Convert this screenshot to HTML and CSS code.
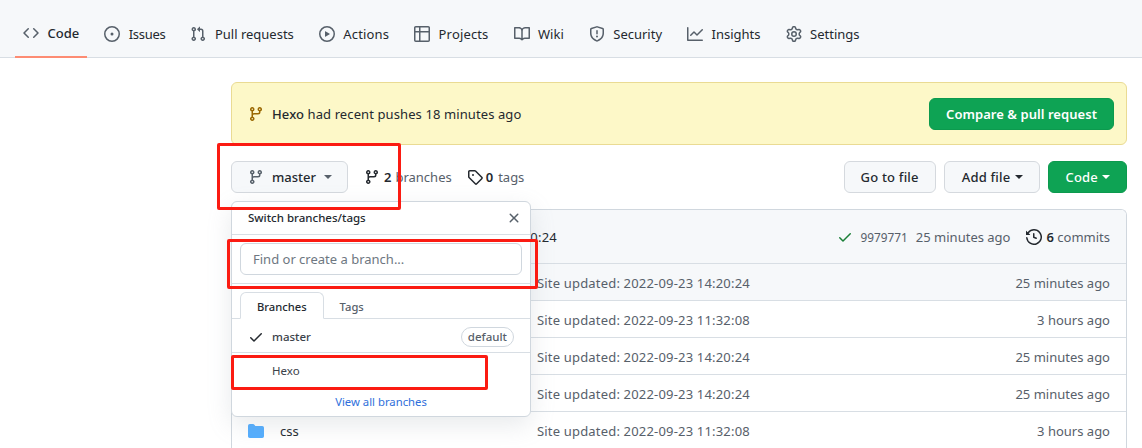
FILE: index.html
```html
<!DOCTYPE html>
<html lang="en">
<head>
<meta charset="utf-8">
<title>Repository</title>
<link rel="stylesheet" href="styles.css">
</head>
<body>
<svg class="defs" aria-hidden="true">
<symbol id="i-code" viewBox="0 0 16 16"><path d="M4.72 3.22a.75.75 0 011.06 1.06L2.06 8l3.72 3.72a.75.75 0 11-1.06 1.06L.47 8.53a.75.75 0 010-1.06l4.25-4.25zm6.56 0a.75.75 0 10-1.06 1.06L13.94 8l-3.72 3.72a.75.75 0 101.06 1.06l4.25-4.25a.75.75 0 000-1.06l-4.25-4.25z"/></symbol>
<symbol id="i-issue" viewBox="0 0 16 16"><path d="M8 9.5a1.5 1.5 0 100-3 1.5 1.5 0 000 3z"/><path fill-rule="evenodd" d="M8 0a8 8 0 100 16A8 8 0 008 0zM1.5 8a6.5 6.5 0 1113 0 6.5 6.5 0 01-13 0z"/></symbol>
<symbol id="i-pr" viewBox="0 0 16 16"><path fill-rule="evenodd" d="M7.177 3.073L9.573.677A.25.25 0 0110 .854v4.792a.25.25 0 01-.427.177L7.177 3.427a.25.25 0 010-.354zM3.75 2.5a.75.75 0 100 1.5.75.75 0 000-1.5zm-2.25.75a2.25 2.25 0 113 2.122v5.256a2.251 2.251 0 11-1.5 0V5.372A2.25 2.25 0 011.5 3.25zM11 2.5h-1V4h1a1 1 0 011 1v5.628a2.251 2.251 0 101.5 0V5A2.5 2.5 0 0011 2.5zm1 10.25a.75.75 0 111.5 0 .75.75 0 01-1.5 0zM3.75 12a.75.75 0 100 1.5.75.75 0 000-1.5z"/></symbol>
<symbol id="i-play" viewBox="0 0 16 16"><path fill-rule="evenodd" d="M1.5 8a6.5 6.5 0 1113 0 6.5 6.5 0 01-13 0zM8 0a8 8 0 100 16A8 8 0 008 0zM6.379 5.227A.25.25 0 006 5.442v5.117a.25.25 0 00.379.214l4.264-2.559a.25.25 0 000-.428L6.379 5.227z"/></symbol>
<symbol id="i-table" viewBox="0 0 16 16"><path fill-rule="evenodd" d="M0 1.75C0 .784.784 0 1.75 0h12.5C15.216 0 16 .784 16 1.75v12.5A1.75 1.75 0 0114.25 16H1.75A1.75 1.75 0 010 14.25V1.75zM6.5 6.5v8h7.75a.25.25 0 00.25-.25V6.5h-8zm8-1.5V1.75a.25.25 0 00-.25-.25H6.5V5h8zM5 1.5H1.75a.25.25 0 00-.25.25V5H5V1.5zM1.5 6.5v7.75c0 .138.112.25.25.25H5v-8H1.5z"/></symbol>
<symbol id="i-book" viewBox="0 0 16 16"><path fill-rule="evenodd" d="M0 1.75A.75.75 0 01.75 1h4.253c1.227 0 2.317.59 3 1.501A3.744 3.744 0 0111.006 1h4.245a.75.75 0 01.75.75v10.5a.75.75 0 01-.75.75h-4.507a2.25 2.25 0 00-1.591.659l-.622.621a.75.75 0 01-1.06 0l-.622-.621A2.25 2.25 0 005.258 13H.75a.75.75 0 01-.75-.75V1.75zm8.755 3a2.25 2.25 0 012.25-2.25H14.5v9h-3.757c-.71 0-1.4.201-1.992.572l.004-7.322zm-1.504 7.324l.004-5.073-.002-2.253A2.25 2.25 0 005.003 2.5H1.5v9h3.757a3.75 3.75 0 011.994.574z"/></symbol>
<symbol id="i-shield" viewBox="0 0 16 16"><path fill-rule="evenodd" d="M7.467.133a1.75 1.75 0 011.066 0l5.25 1.68A1.75 1.75 0 0115 3.48V7c0 1.566-.32 3.182-1.303 4.682-.983 1.498-2.585 2.813-5.032 3.855a1.7 1.7 0 01-1.33 0c-2.447-1.042-4.049-2.357-5.032-3.855C1.32 10.182 1 8.566 1 7V3.48a1.75 1.75 0 011.217-1.667l5.25-1.68zm.61 1.429a.25.25 0 00-.153 0l-5.25 1.68a.25.25 0 00-.174.238V7c0 1.358.275 2.666 1.057 3.86.784 1.194 2.121 2.34 4.366 3.297a.2.2 0 00.154 0c2.245-.956 3.582-2.104 4.366-3.298C13.225 9.666 13.5 8.36 13.5 7V3.48a.25.25 0 00-.174-.237l-5.25-1.68zM9 10.5a1 1 0 11-2 0 1 1 0 012 0zm-.25-5.75a.75.75 0 10-1.5 0v3a.75.75 0 001.5 0v-3z"/></symbol>
<symbol id="i-graph" viewBox="0 0 16 16"><path fill-rule="evenodd" d="M1.5 1.75a.75.75 0 00-1.5 0v12.5c0 .414.336.75.75.75h14.5a.75.75 0 000-1.5H1.5V1.75zm14.28 2.53a.75.75 0 00-1.06-1.06L10 7.94 7.53 5.47a.75.75 0 00-1.06 0L3.22 8.72a.75.75 0 001.06 1.06L7 7.06l2.47 2.47a.75.75 0 001.06 0l5.25-5.25z"/></symbol>
<symbol id="i-gear" viewBox="0 0 16 16"><path fill-rule="evenodd" d="M7.429 1.525a6.593 6.593 0 011.142 0c.036.003.108.036.137.146l.289 1.105c.147.56.55.967.997 1.189.174.086.341.183.501.29.417.278.97.423 1.53.27l1.102-.303c.11-.03.175.016.195.046.219.31.41.641.573.989.014.031.022.11-.059.19l-.815.806c-.411.406-.562.957-.53 1.456a4.588 4.588 0 010 .582c-.032.499.119 1.05.53 1.456l.815.806c.08.08.073.159.059.19a6.494 6.494 0 01-.573.99c-.02.029-.086.074-.195.045l-1.103-.303c-.559-.153-1.112-.008-1.529.27-.16.107-.327.204-.5.29-.449.222-.851.628-.998 1.189l-.289 1.105c-.029.11-.101.143-.137.146a6.613 6.613 0 01-1.142 0c-.036-.003-.108-.037-.137-.146l-.289-1.105c-.147-.56-.55-.967-.997-1.189a4.502 4.502 0 01-.501-.29c-.417-.278-.97-.423-1.53-.27l-1.102.303c-.11.03-.175-.016-.195-.046a6.492 6.492 0 01-.573-.989c-.014-.031-.022-.11.059-.19l.815-.806c.411-.406.562-.957.53-1.456a4.587 4.587 0 010-.582c.032-.499-.119-1.05-.53-1.456l-.815-.806c-.08-.08-.073-.159-.059-.19a6.44 6.44 0 01.573-.99c.02-.029.086-.075.195-.045l1.103.303c.559.153 1.112.008 1.529-.27.16-.107.327-.204.5-.29.449-.222.851-.628.998-1.189l.289-1.105c.029-.11.101-.143.137-.146zM8 0c-.236 0-.47.01-.701.03-.743.065-1.29.615-1.458 1.261l-.29 1.106c-.017.066-.078.158-.211.224a5.994 5.994 0 00-.668.386c-.123.082-.233.09-.3.071L3.27 2.776c-.644-.177-1.392.02-1.82.63a7.977 7.977 0 00-.704 1.217c-.315.675-.111 1.422.363 1.891l.815.806c.05.048.098.147.088.294a6.084 6.084 0 000 .772c.01.147-.038.246-.088.294l-.815.806c-.474.469-.678 1.216-.363 1.891.2.428.436.835.704 1.218.428.609 1.176.806 1.82.63l1.103-.303c.066-.019.176-.011.299.071.213.143.436.272.668.386.133.066.194.158.212.224l.289 1.106c.169.646.715 1.196 1.458 1.26a8.094 8.094 0 001.402 0c.743-.064 1.29-.614 1.458-1.26l.29-1.106c.017-.066.078-.158.211-.224a5.98 5.98 0 00.668-.386c.123-.082.233-.09.3-.071l1.102.302c.644.177 1.392-.02 1.82-.63.268-.382.505-.789.704-1.217.315-.675.111-1.422-.364-1.891l-.814-.806c-.05-.048-.098-.147-.088-.294a6.1 6.1 0 000-.772c-.01-.147.039-.246.088-.294l.814-.806c.475-.469.679-1.216.364-1.891a7.992 7.992 0 00-.704-1.218c-.428-.609-1.176-.806-1.82-.63l-1.103.303c-.066.019-.176.011-.299-.071a5.991 5.991 0 00-.668-.386c-.133-.066-.194-.158-.212-.224L10.16 1.29C9.99.645 9.444.095 8.701.031A8.094 8.094 0 008 0zm1.5 8a1.5 1.5 0 11-3 0 1.5 1.5 0 013 0zM11 8a3 3 0 11-6 0 3 3 0 016 0z"/></symbol>
<symbol id="i-branch" viewBox="0 0 16 16"><path fill-rule="evenodd" d="M11.75 2.5a.75.75 0 100 1.5.75.75 0 000-1.5zm-2.25.75a2.25 2.25 0 113 2.122V6A2.5 2.5 0 0110 8.5H6a1 1 0 00-1 1v1.128a2.251 2.251 0 11-1.5 0V5.372a2.25 2.25 0 111.5 0v1.836A2.492 2.492 0 016 7h4a1 1 0 001-1v-.628A2.25 2.25 0 019.5 3.25zM4.25 12a.75.75 0 100 1.5.75.75 0 000-1.5zM3.5 3.25a.75.75 0 111.5 0 .75.75 0 01-1.5 0z"/></symbol>
<symbol id="i-tag" viewBox="0 0 16 16"><path fill-rule="evenodd" d="M2.5 7.775V2.75a.25.25 0 01.25-.25h5.025a.25.25 0 01.177.073l6.25 6.25a.25.25 0 010 .354l-5.025 5.025a.25.25 0 01-.354 0l-6.25-6.25a.25.25 0 01-.073-.177zm-1.5 0V2.75C1 1.784 1.784 1 2.75 1h5.025c.464 0 .91.184 1.238.513l6.25 6.25a1.75 1.75 0 010 2.474l-5.026 5.026a1.75 1.75 0 01-2.474 0l-6.25-6.25A1.75 1.75 0 011 7.775zM6 5a1 1 0 100 2 1 1 0 000-2z"/></symbol>
<symbol id="i-check" viewBox="0 0 16 16"><path fill-rule="evenodd" d="M13.78 4.22a.75.75 0 010 1.06l-7.25 7.25a.75.75 0 01-1.06 0L2.22 9.28a.75.75 0 011.06-1.06L6 10.94l6.72-6.72a.75.75 0 011.06 0z"/></symbol>
<symbol id="i-x" viewBox="0 0 16 16"><path fill-rule="evenodd" d="M3.72 3.72a.75.75 0 011.06 0L8 6.94l3.22-3.22a.75.75 0 111.06 1.06L9.06 8l3.22 3.22a.75.75 0 11-1.06 1.06L8 9.06l-3.22 3.22a.75.75 0 01-1.06-1.06L6.94 8 3.72 4.78a.75.75 0 010-1.06z"/></symbol>
<symbol id="i-history" viewBox="0 0 16 16"><path fill-rule="evenodd" d="M1.643 3.143L.427 1.927A.25.25 0 000 2.104V5.75c0 .138.112.25.25.25h3.646a.25.25 0 00.177-.427L2.715 4.215a6.5 6.5 0 11-1.18 4.458.75.75 0 10-1.493.154 8.001 8.001 0 101.6-5.684zM7.75 4a.75.75 0 01.75.75v2.992l2.028.812a.75.75 0 01-.557 1.392l-2.5-1A.75.75 0 017 8.25v-3.5A.75.75 0 017.75 4z"/></symbol>
<symbol id="i-folder" viewBox="0 0 16 16"><path d="M1.75 1A1.75 1.75 0 000 2.75v10.5C0 14.216.784 15 1.75 15h12.5A1.75 1.75 0 0016 13.25v-8.5A1.75 1.75 0 0014.25 3H7.5a.25.25 0 01-.2-.1l-.9-1.2C6.07 1.26 5.55 1 5 1H1.75z"/></symbol>
</svg>

<nav class="tabs">
  <a class="tab tab-active"><svg class="ic"><use href="#i-code"/></svg><span>Code</span></a>
  <a class="tab"><svg class="ic"><use href="#i-issue"/></svg><span class="tight">Issues</span></a>
  <a class="tab"><svg class="ic"><use href="#i-pr"/></svg><span>Pull requests</span></a>
  <a class="tab"><svg class="ic"><use href="#i-play"/></svg><span class="loose">Actions</span></a>
  <a class="tab"><svg class="ic"><use href="#i-table"/></svg><span class="loose">Projects</span></a>
  <a class="tab"><svg class="ic"><use href="#i-book"/></svg><span>Wiki</span></a>
  <a class="tab"><svg class="ic"><use href="#i-shield"/></svg><span>Security</span></a>
  <a class="tab"><svg class="ic"><use href="#i-graph"/></svg><span>Insights</span></a>
  <a class="tab"><svg class="ic"><use href="#i-gear"/></svg><span>Settings</span></a>
</nav>

<main class="main">
  <section class="banner">
    <div class="banner-msg"><svg class="ic ic-amber"><use href="#i-branch"/></svg><span><b class="strong">Hexo</b> had recent pushes 18 minutes ago</span></div>
    <a class="btn btn-green btn-compare">Compare &amp; pull request</a>
  </section>

  <section class="toolbar">
    <a class="btn btn-branch"><svg class="ic ic-muted"><use href="#i-branch"/></svg><span class="branch-name">master</span><i class="caret caret-muted"></i></a>
    <a class="meta meta-branches"><svg class="ic ic-dark"><use href="#i-branch"/></svg><b class="count">2</b> <span>branches</span></a>
    <a class="meta meta-tags"><svg class="ic ic-dark"><use href="#i-tag"/></svg><b class="count">0</b> <span>tags</span></a>
    <div class="toolbar-right">
      <a class="btn">Go to file</a>
      <a class="btn btn-add">Add file<i class="caret"></i></a>
      <a class="btn btn-green">Code<i class="caret caret-white"></i></a>
    </div>

    <div class="popup">
      <header class="popup-head"><span>Switch branches/tags</span><svg class="ic ic-x"><use href="#i-x"/></svg></header>
      <div class="popup-filter"><div class="input">Find or create a branch...</div></div>
      <div class="popup-tabs"><span class="ptab ptab-on">Branches</span><span class="ptab">Tags</span></div>
      <div class="pitem pitem-line"><svg class="ic ic-check"><use href="#i-check"/></svg><span class="pitem-name">master</span><span class="pill">default</span></div>
      <div class="pitem"><span class="pitem-name pitem-plain">Hexo</span></div>
      <a class="popup-foot">View all branches</a>
    </div>
  </section>

  <section class="files">
    <div class="commit-row">
      <span class="commit-msg">Site updated: 2022-09-23 14:20:24</span>
      <span class="commit-info"><svg class="ic ic-green"><use href="#i-check"/></svg><span class="sha">9979771</span><span class="ago">25 minutes ago</span><svg class="ic ic-dark ic-hist"><use href="#i-history"/></svg><span class="commits"><b class="count">6</b> commits</span></span>
    </div>
    <div class="row row-hover"><span class="fcell"></span><span class="fmsg">Site updated: 2022-09-23 14:20:24</span><span class="ftime">25 minutes ago</span></div>
    <div class="row"><span class="fcell"></span><span class="fmsg">Site updated: 2022-09-23 11:32:08</span><span class="ftime">3 hours ago</span></div>
    <div class="row"><span class="fcell"></span><span class="fmsg">Site updated: 2022-09-23 14:20:24</span><span class="ftime">25 minutes ago</span></div>
    <div class="row"><span class="fcell"></span><span class="fmsg">Site updated: 2022-09-23 14:20:24</span><span class="ftime">25 minutes ago</span></div>
    <div class="row"><span class="fcell"><svg class="ic ic-folder"><use href="#i-folder"/></svg><span class="fname">css</span></span><span class="fmsg">Site updated: 2022-09-23 11:32:08</span><span class="ftime">3 hours ago</span></div>
  </section>
</main>

<div class="mark mark-a"></div>
<div class="mark mark-b"></div>
<div class="mark mark-c"></div>
</body>
</html>
```

FILE: styles.css
```css
* { box-sizing: border-box; }
html, body { margin: 0; height: 100%; overflow: hidden; }
body {
  position: relative;
  background: #fff;
  color: #24292f;
  font-family: "Noto Sans", "Open Sans", "Liberation Sans", sans-serif;
  font-size: 13px;
  line-height: 20px;
}
.defs { display: none; }
.ic { width: 16px; height: 16px; flex: none; fill: #57606a; display: block; }
.ic-amber { fill: #9a6700; }
.ic-muted { fill: #57606a; }
.ic-dark { fill: #24292f; }
.ic-green { fill: #1a7f37; }
.ic-folder { fill: #54aeff; }
.ic-x { fill: #57606a; }

.tabs {
  display: flex;
  height: 58px;
  padding: 10px 0 0 15px;
  gap: 9px;
  background: #f6f8fa;
  border-bottom: 1px solid #d8dee4;
}
.tab {
  display: flex;
  align-items: center;
  gap: 8.5px;
  height: 48px;
  padding: 0 8px;
  color: #24292f;
}
.tab-active { font-weight: 500; border-bottom: 2px solid #fd8c73; }
.tight { letter-spacing: -.3px; }
.loose { letter-spacing: .15px; }

.main { padding: 24px 15px 0 231px; }

.banner {
  display: flex;
  align-items: center;
  justify-content: space-between;
  height: 63px;
  padding: 0 12px 0 16px;
  background: #fdf8c8;
  border: 1px solid #eadb93;
  border-radius: 6px;
}
.banner-msg { display: flex; align-items: center; gap: 8px; letter-spacing: .1px; }
.strong { font-weight: 500; }

.btn {
  display: inline-flex;
  align-items: center;
  height: 32px;
  padding: 0 16px;
  font-weight: 500;
  letter-spacing: .2px;
  color: #24292f;
  background: #f6f8fa;
  border: 1px solid #d5d9de;
  border-radius: 6px;
}
.btn-green { background: #0ea354; border-color: #0c9a4e; color: #fff; }
.btn-compare { font-weight: 600; letter-spacing: .05px; }
.btn-add { padding-left: 17px; }
.btn-add .caret { margin-left: 5px; }

.toolbar {
  position: relative;
  display: flex;
  align-items: center;
  height: 32px;
  margin-top: 16px;
}
.btn-branch { padding: 0 12px 0 16px; gap: 8px; width: 117px; letter-spacing: 0; }
.branch-name { font-weight: 500; }
.caret {
  display: inline-block;
  width: 0;
  height: 0;
  margin-left: 4px;
  border: 4px solid transparent;
  border-top-color: #24292f;
  border-bottom: 0;
}
.caret-muted { border-top-color: #57606a; margin-left: 0; }
.caret-white { border-top-color: #fff; }

.meta { display: flex; align-items: center; color: #57606a; }
.meta-branches { margin-left: 16px; }
.meta-tags { margin-left: 15px; }
.count { font-weight: 600; color: #24292f; }
.meta .count { margin: 0 4px 0 4px; }
.meta-tags .count { margin: 0 5px 0 3px; }

.toolbar-right { margin-left: auto; display: flex; gap: 8px; }

.popup {
  position: absolute;
  left: 0;
  top: 40px;
  z-index: 2;
  width: 300px;
  height: 216px;
  background: #fff;
  border: 1px solid #d0d7de;
  border-radius: 6px;
  box-shadow: 0 8px 24px rgba(140, 149, 159, .2);
  font-size: 11.5px;
}
.popup-head {
  display: flex;
  align-items: center;
  justify-content: space-between;
  height: 33px;
  padding: 0 8px 0 16px;
  font-weight: 500;
  color: #24292f;
  border-bottom: 1px solid #d8dee4;
}
.popup-filter {
  height: 49px;
  padding: 8px;
  border-bottom: 1px solid #d8dee4;
}
.input {
  height: 32px;
  padding: 0 12px;
  display: flex;
  align-items: center;
  font-size: 13px;
  color: #6e7781;
  border: 1px solid #d0d7de;
  border-radius: 6px;
}
.popup-tabs {
  display: flex;
  height: 35px;
  padding: 8px 8px 0;
  border-bottom: 1px solid #d8dee4;
}
.ptab {
  display: flex;
  align-items: center;
  padding: 2px 16px 0;
  height: 27px;
  font-size: 11.2px;
  color: #57606a;
  font-weight: 500;
}
.ptab-on {
  color: #24292f;
  background: #fff;
  border: 1px solid #d8dee4;
  border-bottom-color: #fff;
  border-radius: 6px 6px 0 0;
}
.pitem {
  display: flex;
  align-items: center;
  height: 34px;
  padding: 2px 16px 0;
  color: #57606a;
}
.pitem-line { padding-top: 3px; border-bottom: 1px solid #d8dee4; }
.ic-check { fill: #24292f; margin-right: 8px; }
.pitem-name { font-weight: 500; color: #3b424a; }
.pitem-plain { margin-left: 24px; font-weight: 400; }
.pill {
  margin-left: auto;
  padding: 0 6px;
  line-height: 18px;
  border: 1px solid #d0d7de;
  border-radius: 2em;
  font-weight: 500;
  color: #57606a;
}
.popup-foot {
  display: block;
  text-align: center;
  color: #2f6fdb;
  font-size: 11.3px;
  margin-top: 5px;
}

.files {
  margin-top: 16px;
  border: 1px solid #d0d7de;
  border-bottom: 0;
  border-radius: 6px 6px 0 0;
  overflow: hidden;
}
.commit-row {
  display: flex;
  align-items: center;
  justify-content: space-between;
  height: 54px;
  padding: 0 16px;
  background: #f6f8fa;
  border-bottom: 1px solid #d8dee4;
}
.commit-msg { padding-left: 96px; letter-spacing: .18px; }
.commit-info { display: flex; align-items: center; color: #57606a; }
.commit-info .ic-green { margin-right: 8px; }
.sha { font-size: 11.8px; }
.ago { margin-left: 8px; }
.ic-hist { margin-left: 16px; margin-right: 4px; }
.commits .count { margin-right: 0; }

.row {
  display: flex;
  align-items: center;
  height: 37px;
  padding: 1px 16px 0;
  color: #57606a;
  border-bottom: 1px solid #d8dee4;
}
.row-hover { background: #f6f8fa; }
.fcell { display: flex; align-items: center; gap: 16px; width: 289px; flex: none; }
.fname { color: #24292f; }
.fmsg { flex: 1; letter-spacing: .18px; }
.ftime { margin-left: auto; }

.mark {
  position: absolute;
  z-index: 3;
  border: 3px solid #fb1b12;
  border-radius: 2px;
  pointer-events: none;
}
.mark-a { left: 217px; top: 143px; width: 184px; height: 67px; }
.mark-b { left: 227px; top: 239px; width: 311px; height: 50px; }
.mark-c { left: 231px; top: 355px; width: 257px; height: 35px; }
```
